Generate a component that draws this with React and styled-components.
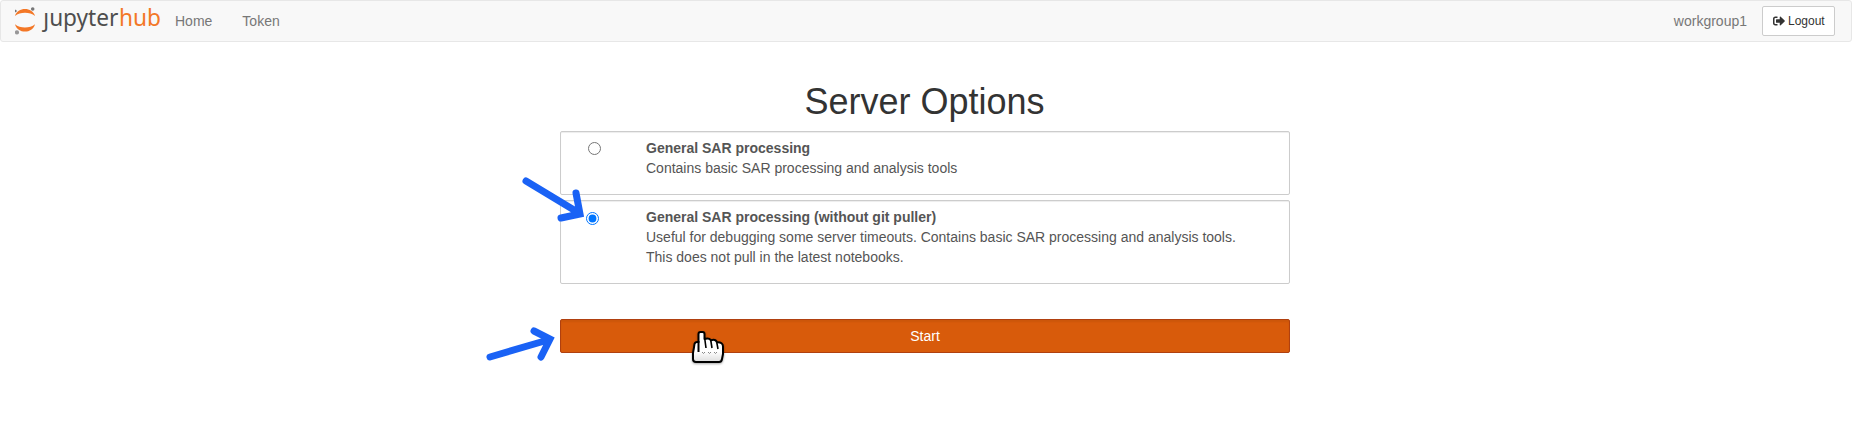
import React from "react";
import styled, { createGlobalStyle } from "styled-components";
import { FaSignOutAlt } from "react-icons/fa";

const GlobalStyle = createGlobalStyle`
  *, *::before, *::after { box-sizing: border-box; }
  body {
    margin: 0;
    background: #fff;
    color: #333;
    font: 14px/20px "Liberation Sans", Arial, sans-serif;
  }
`;

const Page = styled.div`
  position: relative;
  height: 429px;
  overflow: hidden;
`;

const Navbar = styled.nav`
  display: flex;
  align-items: center;
  height: 42px;
  padding: 0 16px 0 14px;
  background: #f8f8f8;
  border: 1px solid #e7e7e7;
  border-radius: 3px;
`;

const Logo = styled.svg`
  display: block;
  width: 150px;
  height: 40px;
  font-family: "Noto Sans", sans-serif;
  font-size: 23.5px;
`;

const NavLink = styled.a`
  color: #777;
  text-decoration: none;
  margin-left: ${(p) => p.$gap}px;
`;

const UserName = styled.span`
  margin-left: auto;
  margin-right: 15px;
  color: #777;
`;

const LogoutButton = styled.button`
  display: flex;
  align-items: center;
  gap: 3px;
  height: 30px;
  width: 73px;
  padding: 0 8px 0 10px;
  font: 12px/18px "Liberation Sans", Arial, sans-serif;
  color: #333;
  background: #fff;
  border: 1px solid #ccc;
  border-radius: 2px;
`;

const Content = styled.main`
  width: 730px;
  margin: 40px 0 0 560px;
`;

const Heading = styled.h1`
  margin: 0 1px 9px 0;
  font-size: 36px;
  font-weight: 400;
  line-height: 40px;
  text-align: center;
`;

const Option = styled.label`
  display: flex;
  align-items: flex-start;
  margin-bottom: 5px;
  padding: 6px 30px 16px ${(p) => p.$indent}px;
  color: #555;
  border: 1px solid #ccc;
  border-radius: 2px;
  box-shadow: inset 0 1px 1px rgba(0, 0, 0, 0.075);
`;

const Radio = styled.input`
  flex: none;
  width: 13px;
  height: 13px;
  margin: ${(p) => p.$top}px ${(p) => p.$gap}px 0 0;
`;

const OptionText = styled.div`
  width: 600px;
`;

const StartButton = styled.button`
  display: block;
  width: 100%;
  height: 34px;
  margin-top: 35px;
  padding: 0;
  font: 14px/20px "Liberation Sans", Arial, sans-serif;
  color: #fff;
  background: #d85b0b;
  border: 1px solid #b0400f;
  border-radius: 2px;
  box-shadow: inset 0 2px 2px rgba(0, 0, 0, 0.06);
`;

const Overlay = styled.svg`
  position: absolute;
  left: ${(p) => p.$x}px;
  top: ${(p) => p.$y}px;
  overflow: visible;
  pointer-events: none;
`;

const CursorOverlay = styled(Overlay)`
  filter: drop-shadow(0 1px 1px rgba(0, 0, 0, 0.35));
`;

function JupyterHubLogo() {
  return (
    <Logo viewBox="15 1 150 40" role="img">
      <defs>
        <clipPath id="stem">
          <path d="M35 12.6h15V5h115v36H35z" />
        </clipPath>
      </defs>
      <path d="M15 16C17.5 6.8 32.5 6.8 35 16C30 11.8 20 11.8 15 16Z" fill="#f37726" />
      <path d="M15 24.2C17.5 34 32.5 34 35 24.2C30 28.6 20 28.6 15 24.2Z" fill="#f37726" />
      <circle cx="32.7" cy="9" r="1.8" fill="#767677" />
      <circle cx="15.5" cy="11" r="1.2" fill="#767677" />
      <circle cx="17" cy="32.4" r="2.1" fill="#989798" />
      <text x="43.3" y="26.4" textLength="75" lengthAdjust="spacingAndGlyphs" fill="#4e4e4e" clipPath="url(#stem)">jupyter</text>
      <text x="118.9" y="26.4" textLength="42" lengthAdjust="spacingAndGlyphs" fill="#f37726">hub</text>
    </Logo>
  );
}

function Arrow({ x, y, width, height, d }) {
  return (
    <Overlay $x={x} $y={y} width={width} height={height} viewBox={`0 0 ${width} ${height}`}>
      <path d={d} fill="none" stroke="#1a62f5" strokeWidth="7" strokeLinecap="round" />
    </Overlay>
  );
}

function HandCursor() {
  return (
    <CursorOverlay $x={692} $y={331} width={34} height={34} viewBox="0 0 34 34">
      <defs>
        <linearGradient id="glove" x1="0" y1="0" x2="0" y2="1">
          <stop offset="0.65" stopColor="#fff" />
          <stop offset="1" stopColor="#ddd" />
        </linearGradient>
      </defs>
      <path
        d="M6.5 11V3Q6.5 1 8.5 1H10.5Q12.5 1 12.5 3V8Q17 6.5 19 9.3Q23.5 7.8 25 11.3Q31 11 31 15.5V23L30 28Q29.5 31 27 31H4Q1 31 1 28V22Q2 17 2.5 13Q3 10.5 6.5 11Z"
        fill="url(#glove)" stroke="#000" strokeWidth="2" strokeLinejoin="round"
      />
      <path d="M6.5 10V21" fill="none" stroke="#000" strokeWidth="2" />
      <path d="M12.8 8L14 17M18.8 9.5L20 17M24.8 11.5L26 18" fill="none" stroke="#000" strokeWidth="1.6" />
      <path d="M10 21q1.5 3 3 0M16 21q1.5 3 3 0M22 21q1.5 3 3 0" fill="none" stroke="#888" />
    </CursorOverlay>
  );
}

export default function App() {
  return (
    <Page>
      <GlobalStyle />
      <Navbar>
        <JupyterHubLogo />
        <NavLink $gap={10}>Home</NavLink>
        <NavLink $gap={30}>Token</NavLink>
        <UserName>workgroup1</UserName>
        <LogoutButton><FaSignOutAlt size={12} />Logout</LogoutButton>
      </Navbar>
      <Content>
        <Heading>Server Options</Heading>
        <Option $indent={27}>
          <Radio type="radio" name="profile" $top={4} $gap={45} />
          <OptionText>
            <strong>General SAR processing</strong>
            <br />
            Contains basic SAR processing and analysis tools
          </OptionText>
        </Option>
        <Option $indent={25}>
          <Radio type="radio" name="profile" defaultChecked $top={5} $gap={47} />
          <OptionText>
            <strong>General SAR processing (without git puller)</strong>
            <br />
            Useful for debugging some server timeouts. Contains basic SAR processing and analysis tools. This does not pull in the latest notebooks.
          </OptionText>
        </Option>
        <StartButton>Start</StartButton>
      </Content>
      <Arrow x={520} y={175} width={70} height={50} d="M6 6L59 38M56 18L60 39L41 43" />
      <Arrow x={484} y={324} width={76} height={42} d="M6 33L64 16M50 7L66 15L57 33" />
      <HandCursor />
    </Page>
  );
}
